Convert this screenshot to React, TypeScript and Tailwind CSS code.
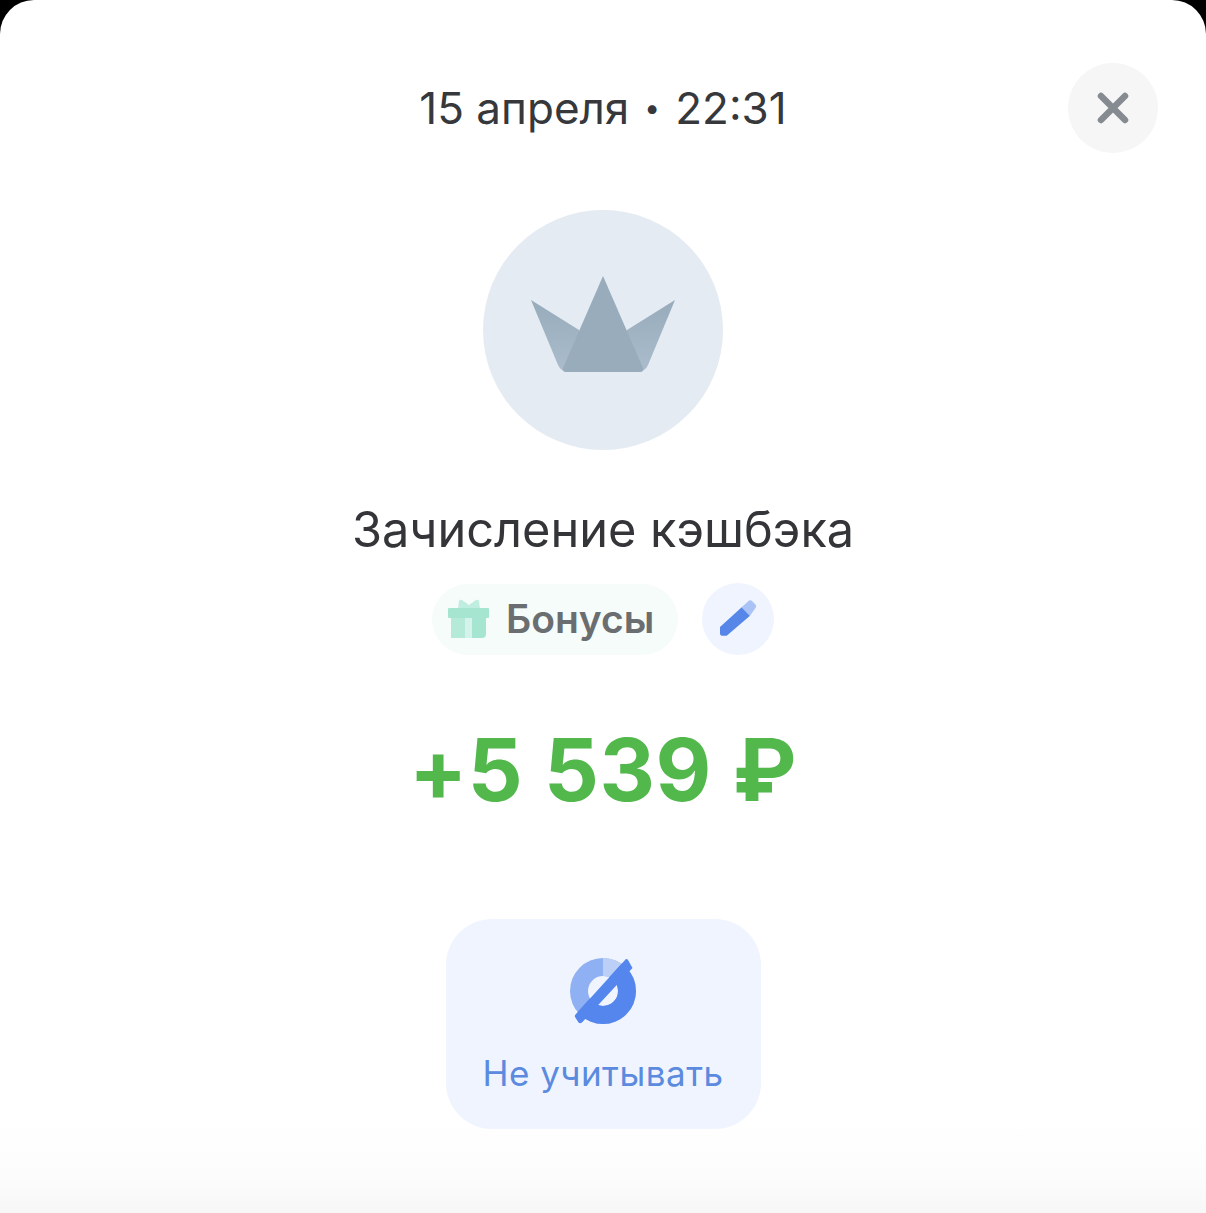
function CloseIcon() {
  return (
    <svg width="34" height="34" viewBox="0 0 34 34" fill="none">
      <path d="M5 5 L29 29 M29 5 L5 29" stroke="#868b92" strokeWidth="6.5" strokeLinecap="round" />
    </svg>
  )
}

function Crown() {
  return (
    <svg width="144" height="96" viewBox="0 0 144 96" className="mb-[12px]">
      <defs>
        <linearGradient id="wing" x1="0" y1="0" x2="0" y2="1">
          <stop offset="0" stopColor="#97abba" />
          <stop offset="1" stopColor="#abbdcc" />
        </linearGradient>
      </defs>
      <path d="M0 24 L48 54 L60 96 H38 Q30 96 27 89 Z" fill="url(#wing)" />
      <path d="M144 24 L96 54 L84 96 H106 Q114 96 117 89 Z" fill="url(#wing)" />
      <path d="M72 0 L112 92 Q113 96 109 96 H35 Q31 96 32 92 Z" fill="#98acbc" />
    </svg>
  )
}

function Gift() {
  return (
    <svg width="42" height="40" viewBox="0 0 42 40">
      <path d="M11 2 Q12 0 14 1 L21 6 L28 1 Q30 0 31 2 L32 10 H10 Z" fill="#bfeee0" />
      <rect x="0" y="9" width="41" height="10" rx="1" fill="#a6e5d0" />
      <path d="M3 19 H17 V39 H3 Z" fill="#b5ead9" />
      <path d="M17 19 H24 V39 H17 Z" fill="#d5f3ea" />
      <path d="M24 19 H38 V35 Q38 39 34 39 H24 Z" fill="#a6e5d0" />
    </svg>
  )
}

function Pencil() {
  return (
    <svg width="72" height="72" viewBox="0 0 72 72">
      <path d="M18 44 L39.7 24.3 L48 32.7 L24.7 52.7 L20 52.7 Q18 52.7 18 50.5 Z" fill="#5586e8" />
      <path d="M39.7 24.3 L47 17.6 Q48.5 16.5 50 18 L53.5 21.5 Q55 23.5 53.5 25 L48 32.7 Z" fill="#aac3f6" />
    </svg>
  )
}

function HideIcon() {
  const ring = 'M33 0 A33 33 0 1 1 33 66 A33 33 0 1 1 33 0 Z M33 18 A15 15 0 1 0 33 48 A15 15 0 1 0 33 18 Z'
  return (
    <svg width="70" height="70" viewBox="-2 0 70 70">
      <defs>
        <clipPath id="hide-below">
          <path d="M55.7 1.3 L5 57 L9 70 L70 70 L70 0 Z" />
        </clipPath>
      </defs>
      <path d={ring} fillRule="evenodd" fill="#8fb0f2" />
      <path d="M33 0 A33 33 0 0 1 66 33 L48 33 A15 15 0 0 0 33 18 Z" fill="#bcd0f7" />
      <path d={ring} fillRule="evenodd" fill="#5586ee" clipPath="url(#hide-below)" />
      <path d="M55.7 1.3 Q57 0.5 58 2 L62.5 10 L12 64.5 Q10 66 8.5 64.5 L5 59 Q4.5 57.5 5.5 56.5 Z" fill="#5586ee" />
    </svg>
  )
}

export default function App() {
  return (
    <div className="h-[1213px] w-[1206px] overflow-hidden bg-black font-['Inter',sans-serif]">
      <div className="relative flex h-full flex-col items-center rounded-t-[34px] bg-gradient-to-b from-white from-[92%] via-[#fcfcfc] via-[97%] to-[#f7f7f7] pt-[80px]">
        <div className="flex h-[56px] items-center text-[44px] leading-[56px] text-[#36383b]">
          <span>15 апреля</span>
          <span className="w-[46px] text-center text-[28px]">•</span>
          <span>22:31</span>
        </div>
        <button className="absolute right-[48px] top-[63px] flex h-[90px] w-[90px] items-center justify-center rounded-full bg-[#f6f6f7]">
          <CloseIcon />
        </button>

        <div className="mt-[74px] flex h-[240px] w-[240px] items-center justify-center rounded-full bg-[#e4ebf3]">
          <Crown />
        </div>

        <div className="mt-[50px] h-[60px] text-[48.7px] leading-[60px] text-[#333538]">Зачисление кэшбэка</div>

        <div className="mt-[23px] flex items-center gap-[24px]">
          <div className="flex h-[71px] w-[246px] items-center gap-[16px] rounded-full bg-[#f5fcf9] pl-[16px]">
            <Gift />
            <span className="text-[39px] font-semibold text-[#6b6e70]">Бонусы</span>
          </div>
          <button className="flex h-[72px] w-[72px] items-center justify-center rounded-full bg-[#eff4fe]">
            <Pencil />
          </button>
        </div>

        <div className="mt-[65px] h-[100px] text-[86px] font-bold leading-[100px] tracking-[0.5px] text-[#52b84c]">+5 539 ₽</div>

        <button className="mt-[99px] flex h-[210px] w-[315px] flex-col items-center rounded-[46px] bg-[#f0f4fe] pt-[39px]">
          <HideIcon />
          <span className="mt-[23px] text-[35px] leading-[44px] tracking-[0.5px] text-[#5b8ade]">Не учитывать</span>
        </button>
      </div>
    </div>
  )
}
